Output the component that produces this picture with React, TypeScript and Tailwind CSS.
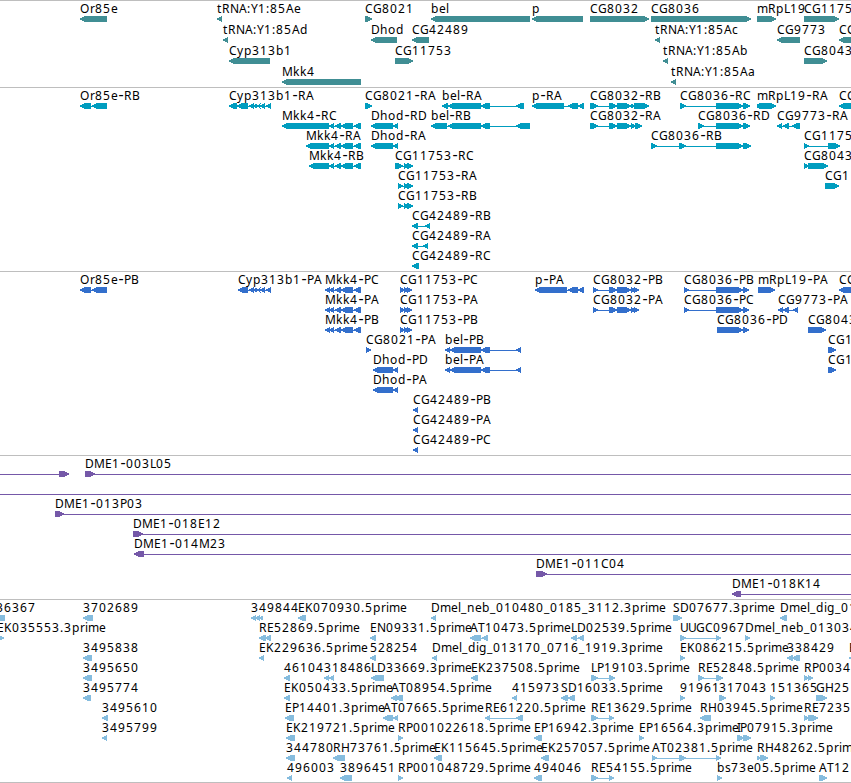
type Dir = 'L' | 'R';
type Feature = [label: string, dir: Dir, segments: number[]];
type Track = { name: string; color: string; pitch: number; height: string; rows: Feature[][] };

// Whole-pixel glyph advances used for feature labels.
const ADVANCE: Record<string, number> = {
  '-': 6, '.': 4, ':': 4, _: 6,
  A: 8, B: 7, C: 8, D: 9, E: 7, G: 9, H: 9, I: 3, K: 8, L: 6, M: 11, N: 9, O: 10, P: 7, R: 8, S: 7, T: 7, U: 8, Y: 7,
  b: 8, c: 6, d: 8, e: 7, g: 8, h: 8, i: 3, k: 7, l: 3, m: 11, n: 8, o: 8, p: 8, r: 5, s: 6, t: 5, y: 7,
};

function glyphXs(label: string, x: number): string {
  const xs: number[] = [];
  let at = x;
  for (const ch of label) {
    xs.push(ch === '-' ? at + 0.5 : at);
    at += ADVANCE[ch] ?? 8;
  }
  return xs.join(' ');
}

// Inset of the arrow head on each of the six pixel rows of an exon.
const HEAD = [4, 2, 0, 0, 2, 4];

function exonPath(start: number, end: number, top: number, dir: Dir): string {
  return HEAD.map((inset, row) => {
    const from = dir === 'L' ? start + inset : start;
    const to = dir === 'R' ? end - inset : end;
    return `M${from} ${top + row}H${to}v1H${from}Z`;
  }).join('');
}

const MKK4 = [335, 341, 341, 353, 354, 361];
const CYP = [249, 254, 253, 257, 257, 260, 260, 265, 266, 271];

const TRACKS: Track[] = [
  {
    name: 'genes', color: '#408e94', pitch: 21, height: 'h-[87px]',
    rows: [
      [
        ['Or85e', 'L', [80, 107]], ['tRNA:Y1:85Ae', 'L', [217, 222]], ['CG8021', 'R', [365, 372]],
        ['bel', 'L', [431, 530]], ['p', 'L', [532, 583]], ['CG8032', 'R', [590, 649]],
        ['CG8036', 'R', [651, 751]], ['mRpL19', 'R', [757, 776]], ['CG1175', 'R', [804, 839]],
      ],
      [
        ['tRNA:Y1:85Ad', 'L', [223, 228]], ['Dhod', 'L', [371, 397]], ['CG42489', 'L', [412, 429]],
        ['tRNA:Y1:85Ac', 'L', [655, 660]], ['CG9773', 'L', [777, 800]], ['CG', 'L', [839, 870]],
      ],
      [
        ['Cyp313b1', 'L', [229, 270]], ['CG11753', 'R', [395, 413]], ['tRNA:Y1:85Ab', 'L', [663, 668]],
        ['CG8043', 'R', [804, 827]],
      ],
      [['Mkk4', 'L', [282, 361]], ['tRNA:Y1:85Aa', 'L', [671, 676]]],
    ],
  },
  {
    name: 'transcripts', color: '#009dbf', pitch: 20, height: 'h-[184px]',
    rows: [
      [
        ['Or85e-RB', 'L', [80, 91, 92, 107]], ['Cyp313b1-RA', 'L', [229, 237, 237, 248, ...CYP]],
        ['CG8021-RA', 'R', [365, 372]], ['bel-RA', 'L', [442, 448, 448, 481, 481, 490, 516, 524]],
        ['p-RA', 'L', [532, 564, 568, 578, 578, 584]],
        ['CG8032-RB', 'R', [590, 598, 609, 617, 617, 631, 631, 635, 634, 649]],
        ['CG8036-RC', 'R', [680, 686, 716, 743, 743, 750]], ['mRpL19-RA', 'R', [757, 761, 759, 776]],
        ['CG', 'L', [839, 870]],
      ],
      [
        ['Mkk4-RC', 'L', [282, 329, 329, 334, ...MKK4]], ['Dhod-RD', 'L', [371, 393, 393, 398]],
        ['bel-RB', 'L', [431, 447, 448, 481, 481, 490, 516, 530]],
        ['CG8032-RA', 'R', [590, 598, 609, 617, 617, 631, 631, 636, 635, 642]],
        ['CG8036-RD', 'R', [698, 704, 716, 743, 743, 750]], ['CG9773-RA', 'L', [777, 782, 783, 789, 792, 800]],
      ],
      [
        ['Mkk4-RA', 'L', [306, 329, 329, 334, ...MKK4]], ['Dhod-RA', 'L', [371, 393, 393, 398]],
        ['CG8036-RB', 'R', [651, 657, 679, 686, 716, 743, 743, 751]], ['CG1175', 'R', [804, 809, 828, 840]],
      ],
      [
        ['Mkk4-RB', 'L', [309, 329, 329, 334, ...MKK4]], ['CG11753-RC', 'R', [395, 403, 404, 409, 407, 413]],
        ['CG8043', 'R', [804, 809, 808, 828]],
      ],
      [['CG11753-RA', 'R', [398, 403, 404, 409, 407, 413]], ['CG1', 'R', [825, 839]]],
      [['CG11753-RB', 'R', [398, 403, 404, 409, 407, 413]]],
      [['CG42489-RB', 'L', [412, 418, 425, 430]]],
      [['CG42489-RA', 'L', [412, 418, 423, 428]]],
      [['CG42489-RC', 'L', [412, 419]]],
    ],
  },
  {
    name: 'cds', color: '#336fcc', pitch: 20, height: 'h-[184px]',
    rows: [
      [
        ['Or85e-PB', 'L', [80, 91, 92, 107]], ['Cyp313b1-PA', 'L', [238, 248, ...CYP]],
        ['Mkk4-PC', 'L', [325, 330, 329, 334, ...MKK4]], ['CG11753-PC', 'R', [400, 405, 404, 409, 407, 412]],
        ['p-PA', 'L', [535, 567, 568, 578, 578, 584]],
        ['CG8032-PB', 'R', [593, 598, 609, 617, 617, 631, 631, 636, 634, 639]],
        ['CG8036-PB', 'R', [684, 689, 716, 743, 743, 749]], ['mRpL19-PA', 'R', [758, 775]], ['CG', 'L', [839, 870]],
      ],
      [
        ['Mkk4-PA', 'L', [325, 330, 329, 334, ...MKK4]], ['CG11753-PA', 'R', [400, 405, 404, 409, 407, 412]],
        ['CG8032-PA', 'R', [593, 598, 609, 617, 617, 631, 631, 636, 634, 639]],
        ['CG8036-PC', 'R', [684, 689, 716, 743, 743, 749]], ['CG9773-PA', 'L', [778, 783, 783, 789, 793, 798]],
      ],
      [
        ['Mkk4-PB', 'L', [325, 330, 329, 334, ...MKK4]], ['CG11753-PB', 'R', [400, 405, 404, 409, 407, 412]],
        ['CG8036-PD', 'R', [717, 743, 743, 749]], ['CG8043', 'R', [808, 826]],
      ],
      [['CG8021-PA', 'R', [366, 371]], ['bel-PB', 'L', [445, 450, 450, 481, 481, 490, 516, 521]], ['CG1', 'R', [828, 836]]],
      [['Dhod-PD', 'L', [373, 393, 393, 398]], ['bel-PA', 'L', [445, 450, 450, 481, 481, 490, 516, 521]], ['CG1', 'R', [828, 836]]],
      [['Dhod-PA', 'L', [373, 393, 393, 398]]],
      [['CG42489-PB', 'L', [413, 418]]],
      [['CG42489-PA', 'L', [413, 418]]],
      [['CG42489-PC', 'L', [413, 418]]],
    ],
  },
  {
    name: 'clones', color: '#7558a8', pitch: 20, height: 'h-[144px]',
    rows: [
      [['', 'R', [-20, -10, 59, 69]], ['DME1-003L05', 'R', [85, 95, 860, 870]]],
      [['', 'R', [-20, -10, 860, 870]]],
      [['DME1-013P03', 'R', [55, 64, 860, 870]]],
      [['DME1-018E12', 'R', [133, 143, 860, 870]]],
      [['DME1-014M23', 'L', [134, 144, 860, 870]]],
      [['DME1-011C04', 'R', [536, 547, 860, 870]]],
      [['DME1-018K14', 'L', [732, 741, 860, 870]]],
    ],
  },
  {
    name: 'ests', color: '#85bcde', pitch: 20, height: 'h-[183px]',
    rows: [
      [
        ['36367', 'L', [-4, 5]], ['3702689', 'L', [83, 93]], ['349844', 'L', [251, 256, 255, 260, 259, 263]],
        ['EK070930.5prime', 'L', [298, 306]], ['Dmel_neb_010480_0185_3112.3prime', 'L', [431, 436]],
        ['SD07677.3prime', 'R', [673, 682]], ['Dmel_dig_013', 'L', [780, 787]],
      ],
      [
        ['EK035553.3prime', 'R', [-3, 4]], ['RE52869.5prime', 'L', [259, 266, 265, 271]],
        ['EN09331.5prime', 'L', [370, 376]], ['AT10473.5prime', 'L', [470, 481, 482, 488]],
        ['LD02539.5prime', 'L', [571, 577, 578, 584]], ['UUGC0967', 'R', [680, 686, 716, 721]],
        ['Dmel_neb_013034', 'R', [745, 750]],
      ],
      [
        ['3495838', 'L', [83, 92]], ['EK229636.5prime', 'L', [259, 264]], ['528254', 'L', [370, 376]],
        ['Dmel_dig_013170_0716_1919.3prime', 'L', [432, 437]], ['EK086215.5prime', 'R', [680, 685]],
        ['338429', 'L', [787, 793, 792, 800]], ['E', 'L', [849, 855]],
      ],
      [
        ['3495650', 'L', [83, 92]], ['46104', 'L', [284, 290]], ['318486', 'L', [324, 329, 329, 334]],
        ['LD33669.3prime', 'L', [371, 384]], ['EK237508.5prime', 'L', [471, 478]],
        ['LP19103.5prime', 'R', [591, 598, 609, 615]], ['RE52848.5prime', 'R', [698, 704, 716, 723]],
        ['RP0034', 'R', [804, 809, 808, 813]],
      ],
      [
        ['3495774', 'L', [83, 91]], ['EK050433.5prime', 'L', [284, 290]], ['AT08954.5prime', 'L', [391, 397, 395, 403]],
        ['415973', 'L', [512, 517]], ['SD16033.5prime', 'L', [561, 568, 568, 575]], ['91961', 'R', [680, 685]],
        ['317043', 'R', [719, 726]], ['151365', 'R', [770, 775]], ['GH25', 'R', [816, 827]],
      ],
      [
        ['3495610', 'L', [102, 108]], ['EP14401.3prime', 'L', [285, 294]], ['AT07665.5prime', 'L', [383, 393, 393, 398]],
        ['RE61220.5prime', 'L', [485, 490, 516, 523]], ['RE13629.5prime', 'R', [591, 598, 609, 614]],
        ['RH03945.5prime', 'L', [700, 711]], ['RE7235', 'R', [804, 809, 808, 818]],
      ],
      [
        ['3495799', 'L', [102, 107]], ['EK219721.5prime', 'L', [286, 295]], ['RP001022618.5prime', 'R', [398, 403]],
        ['EP16942.3prime', 'L', [534, 542]], ['EP16564.3prime', 'R', [639, 644]], ['IP07915.3prime', 'R', [737, 744, 743, 751]],
      ],
      [
        ['344780', 'L', [286, 295]], ['RH73761.5prime', 'L', [333, 345]], ['EK115645.5prime', 'L', [434, 442]],
        ['EK257057.5prime', 'L', [541, 549]], ['AT02381.5prime', 'R', [652, 657, 679, 686, 716, 721]],
        ['RH48262.5prime', 'R', [757, 761, 760, 768]],
      ],
      [
        ['496003', 'L', [287, 292]], ['3896451', 'L', [340, 352]], ['RP001048729.5prime', 'R', [398, 403]],
        ['494046', 'L', [534, 542]], ['RE54155.5prime', 'R', [591, 598, 609, 614]],
        ['bs73e05.5prime', 'R', [717, 722]], ['AT12', 'R', [819, 827]],
      ],
    ],
  },
];

function FeatureGlyph({ feature, top }: { feature: Feature; top: number }) {
  const [label, dir, segs] = feature;
  const exons: string[] = [];
  for (let i = 0; i < segs.length; i += 2) exons.push(exonPath(segs[i], segs[i + 1], top + 16, dir));
  const [stem, suffix] = label.split('-');
  return (
    <g>
      {segs.length > 2 && (
        <rect x={segs[0] + 2} y={top + 19} width={segs[segs.length - 1] - segs[0] - 4} height={1} />
      )}
      <path d={exons.join('')} />
      {label && (
        <text x={glyphXs(label, segs[0])} y={top + 13} fill="#000">
          {stem}
          {suffix && <tspan className="text-[16px]">-</tspan>}
          {suffix}
        </text>
      )}
    </g>
  );
}

export default function App() {
  return (
    <main className="flex h-[783px] w-[851px] flex-col overflow-hidden bg-white">
      {TRACKS.map((track) => (
        <section key={track.name} className={`w-full shrink-0 overflow-hidden border-t border-[#bebebe] ${track.height}`}>
          <svg
            className="-mt-px block h-full w-full font-['Noto_Sans',sans-serif] text-[12px]"
            fill={track.color}
          >
            {track.rows.map((row, r) =>
              row.map((f, i) => <FeatureGlyph key={`${r}-${i}`} feature={f} top={r * track.pitch} />),
            )}
          </svg>
        </section>
      ))}
      <div className="h-px w-full shrink-0 bg-[#bebebe]" />
    </main>
  );
}
